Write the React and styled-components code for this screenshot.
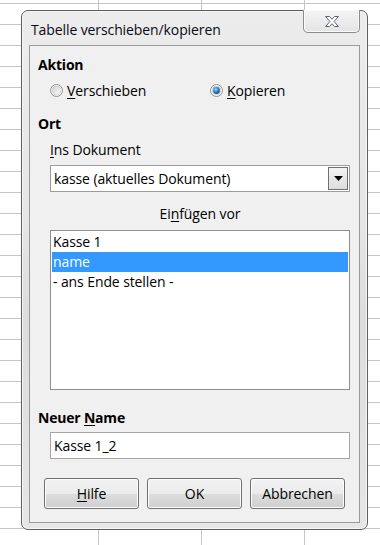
import React from "react";
import styled, { createGlobalStyle } from "styled-components";

const Global = createGlobalStyle`
  html, body { margin: 0; padding: 0; }
  body {
    width: 380px;
    height: 545px;
    overflow: hidden;
    background-color: #ffffff;
    background-image:
      repeating-linear-gradient(to bottom, transparent 0, transparent 3px, #c6c6c6 3px, #c6c6c6 4px, transparent 4px, transparent 21px),
      linear-gradient(to right, transparent 98px, #c6c6c6 98px, #c6c6c6 99px, transparent 99px, transparent 201px, #c6c6c6 201px, #c6c6c6 202px, transparent 202px, transparent 304px, #c6c6c6 304px, #c6c6c6 305px, transparent 305px);
    background-size: 380px 21px, 380px 545px;
    background-repeat: repeat-y, no-repeat;
    font-family: "Open Sans", "Noto Sans", sans-serif;
    color: #000;
  }
  #root { padding: 10px 0 0 21px; }
`;

const Frame = styled.div`
  width: 347px;
  height: 520px;
  box-sizing: border-box;
  border: 1px solid #5e5e5e;
  border-radius: 7px;
  background: linear-gradient(to bottom, #ececec 0%, #e6e6e6 40%, #dcdcdc 60%, #e6e6e6 100%);
  box-shadow: inset 0 0 0 1px #f6f6f6;
  display: flex;
  flex-direction: column;
  padding: 0 7px 6px 7px;
`;

const TitleBar = styled.div`
  height: 34px;
  display: flex;
  align-items: flex-start;
  justify-content: space-between;
`;

const Title = styled.div`
  font-size: 14px;
  letter-spacing: -0.1px;
  color: #0a0a14;
  padding: 9px 0 0 2px;
`;

const CloseButton = styled.div`
  width: 57px;
  height: 23px;
  box-sizing: border-box;
  margin-top: -1px;
  border: 1px solid #8c8c8c;
  border-top: none;
  border-radius: 0 0 5px 5px;
  background: linear-gradient(to bottom, #f4f4f4, #e4e4e4);
  box-shadow: inset 0 0 0 1px #fafafa;
  display: flex;
  align-items: center;
  justify-content: center;
`;

const Client = styled.div`
  flex: 1;
  border: 1px solid #9a9a9a;
  background: #f0f0f0;
  display: flex;
  flex-direction: column;
  padding: 0 0 0 8px;
`;

const SectionLabel = styled.div`
  font-weight: 700;
  font-size: 14px;
  letter-spacing: -0.2px;
  height: 20px;
  line-height: 20px;
  margin-top: ${(p) => p.$top}px;
`;

const RadioRow = styled.div`
  display: flex;
  align-items: center;
  height: 20px;
  margin-top: 5px;
  padding-left: 12px;
`;

const RadioItem = styled.label`
  display: flex;
  align-items: center;
  gap: 4px;
  font-size: 14px;
  letter-spacing: -0.1px;
  width: ${(p) => p.$w}px;
`;

const U = styled.span`
  text-decoration: underline;
  text-underline-offset: 2px;
`;

const Indented = styled.div`
  padding-left: 12px;
  width: 300px;
  display: flex;
  flex-direction: column;
`;

const Label = styled.div`
  font-size: 14px;
  letter-spacing: -0.1px;
  height: 20px;
  line-height: 20px;
  margin-top: ${(p) => p.$top}px;
  text-align: ${(p) => (p.$center ? "center" : "left")};
`;

const Select = styled.div`
  margin-top: ${(p) => p.$top}px;
  height: 27px;
  box-sizing: border-box;
  border: 1px solid #9c9c9c;
  background: #fff;
  display: flex;
  align-items: center;
  padding: 1px;
`;

const SelectText = styled.div`
  flex: 1;
  font-size: 14px;
  letter-spacing: -0.1px;
  padding-left: 2px;
`;

const DropButton = styled.div`
  width: 20px;
  height: 23px;
  box-sizing: border-box;
  border: 1px solid #707070;
  background: linear-gradient(to bottom, #f3f3f3, #dcdcdc);
  display: flex;
  align-items: center;
  justify-content: center;
`;

const List = styled.div`
  margin-top: ${(p) => p.$top}px;
  height: 160px;
  box-sizing: border-box;
  border: 1px solid #8e8e8e;
  background: #fff;
  padding: 1px 1px;
`;

const ListItem = styled.div`
  height: 20px;
  line-height: 20px;
  font-size: 14px;
  letter-spacing: -0.1px;
  padding-left: 1px;
  background: ${(p) => (p.$selected ? "#3399ff" : "transparent")};
  color: ${(p) => (p.$selected ? "#fff" : "#000")};
`;

const Input = styled.div`
  margin-top: ${(p) => p.$top}px;
  height: 27px;
  box-sizing: border-box;
  border: 1px solid #a6a6a6;
  background: #fff;
  font-size: 14px;
  letter-spacing: -0.1px;
  line-height: 25px;
  padding-left: 3px;
`;

const ButtonRow = styled.div`
  display: flex;
  gap: 8px;
  margin-top: 19px;
  padding-left: 6px;
`;

const Button = styled.div`
  width: 95px;
  height: 31px;
  box-sizing: border-box;
  border: 1px solid #707070;
  border-radius: 3px;
  background: linear-gradient(to bottom, #f2f2f2 0%, #ebebeb 50%, #dddddd 51%, #cfcfcf 100%);
  box-shadow: inset 0 0 0 1px #fcfcfc;
  display: flex;
  align-items: center;
  justify-content: center;
  font-size: 14px;
  letter-spacing: -0.1px;
`;

const Radio = ({ checked }) => (
  <svg width="13" height="13" viewBox="0 0 13 13">
    <defs>
      <linearGradient id={checked ? "rgc" : "rgu"} x1="0" y1="0" x2="1" y2="1">
        <stop offset="0" stopColor="#d0d0d0" />
        <stop offset="1" stopColor="#fafafa" />
      </linearGradient>
      <radialGradient id="dot" cx="0.4" cy="0.35" r="0.7">
        <stop offset="0" stopColor="#9ee1ff" />
        <stop offset="0.5" stopColor="#2a8ad4" />
        <stop offset="1" stopColor="#0f3f6e" />
      </radialGradient>
    </defs>
    <circle cx="6.5" cy="6.5" r="6" fill="#fff" stroke="#8e8f8f" strokeWidth="1" />
    <circle cx="6.5" cy="6.5" r="4.5" fill={`url(#${checked ? "rgc" : "rgu"})`} stroke="#c8c8c8" strokeWidth="0.8" />
    {checked && <circle cx="6.5" cy="6.5" r="3.4" fill="url(#dot)" />}
  </svg>
);

const CloseGlyph = () => (
  <svg width="16" height="13" viewBox="0 0 16 13">
    <path
      d="M1.5 1.5 H5.5 L8 4.3 L10.5 1.5 H14.5 L10 6.5 L14.5 11.5 H10.5 L8 8.7 L5.5 11.5 H1.5 L6 6.5 Z"
      fill="#ffffff"
      stroke="#5b6374"
      strokeWidth="1"
      strokeLinejoin="round"
    />
  </svg>
);

const Arrow = () => (
  <svg width="9" height="5" viewBox="0 0 9 5">
    <path d="M0 0 H9 L4.5 5 Z" fill="#000" />
  </svg>
);

export default function App() {
  return (
    <>
      <Global />
      <Frame>
        <TitleBar>
          <Title>Tabelle verschieben/kopieren</Title>
          <CloseButton>
            <CloseGlyph />
          </CloseButton>
        </TitleBar>
        <Client>
          <SectionLabel $top={9}>Aktion</SectionLabel>
          <RadioRow>
            <RadioItem $w={160}>
              <Radio />
              <span>
                <U>V</U>erschieben
              </span>
            </RadioItem>
            <RadioItem $w={120}>
              <Radio checked />
              <span>
                <U>K</U>opieren
              </span>
            </RadioItem>
          </RadioRow>
          <SectionLabel $top={14}>Ort</SectionLabel>
          <Indented>
            <Label $top={6}>
              <U>I</U>ns Dokument
            </Label>
            <Select $top={5}>
              <SelectText>kasse (aktuelles Dokument)</SelectText>
              <DropButton>
                <Arrow />
              </DropButton>
            </Select>
            <Label $top={12} $center>
              Ei<U>n</U>fügen vor
            </Label>
            <List $top={6}>
              <ListItem>Kasse 1</ListItem>
              <ListItem $selected>name</ListItem>
              <ListItem>- ans Ende stellen -</ListItem>
            </List>
          </Indented>
          <SectionLabel $top={18}>
            Neuer <U>N</U>ame
          </SectionLabel>
          <Indented>
            <Input $top={4}>Kasse 1_2</Input>
          </Indented>
          <ButtonRow>
            <Button>
              <span>
                <U>H</U>ilfe
              </span>
            </Button>
            <Button>OK</Button>
            <Button>Abbrechen</Button>
          </ButtonRow>
        </Client>
      </Frame>
    </>
  );
}
